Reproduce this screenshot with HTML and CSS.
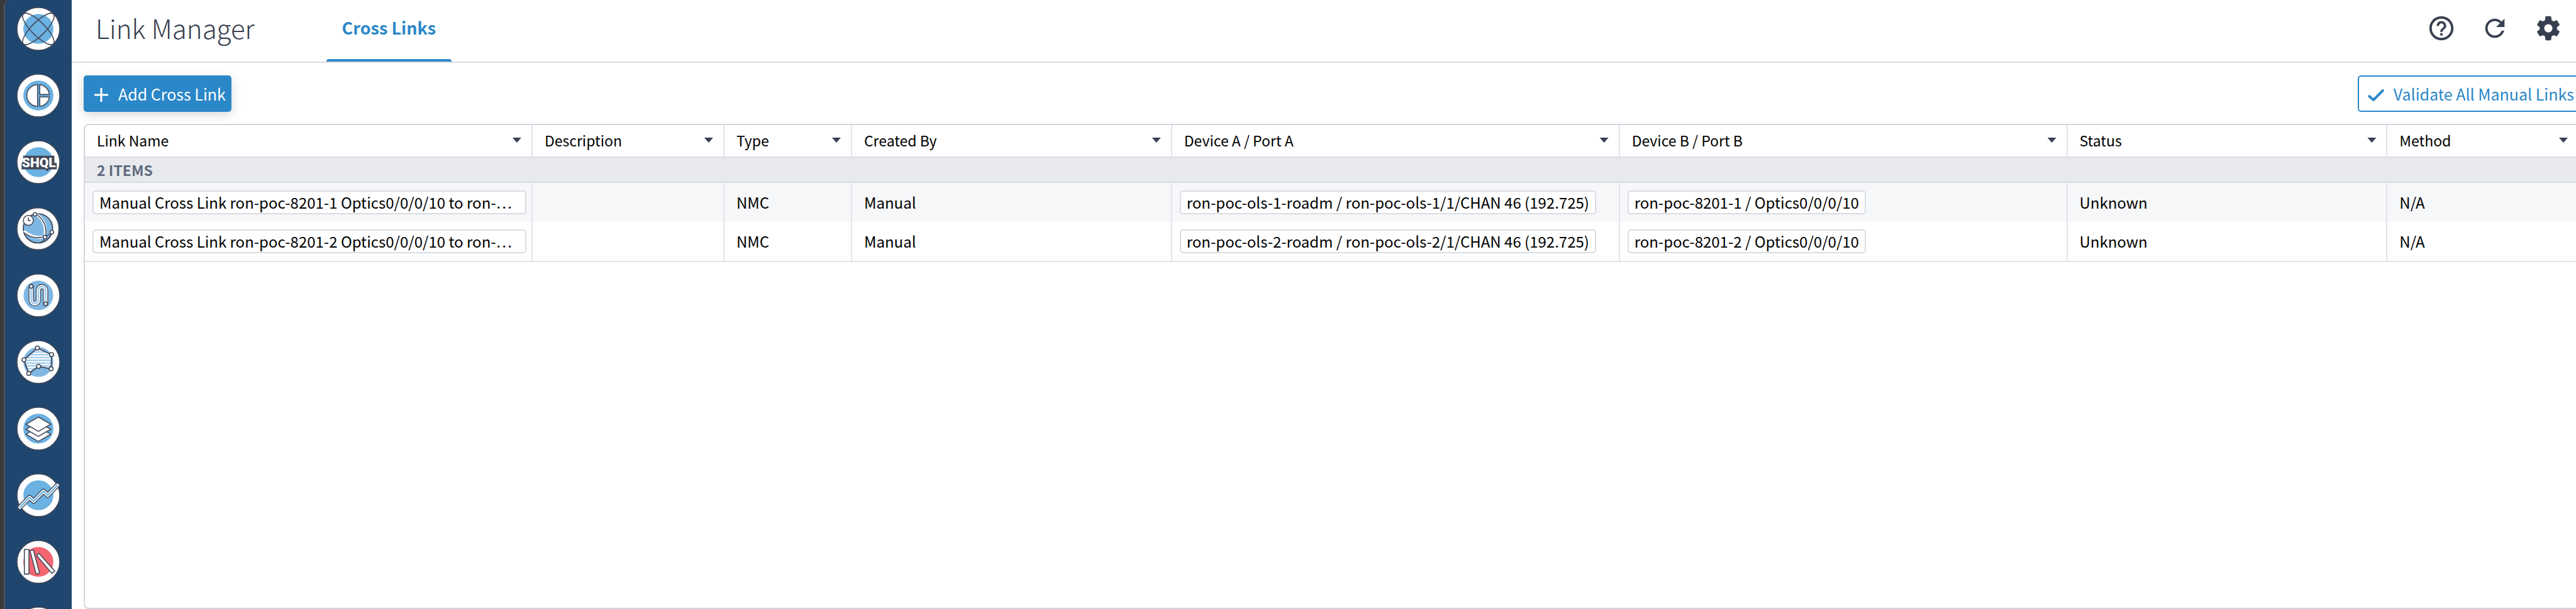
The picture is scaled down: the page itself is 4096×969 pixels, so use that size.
FILE: index.html
```html
<!DOCTYPE html>
<html lang="en">
<head>
    <meta charset="UTF-8">
    <meta name="viewport" content="width=device-width, initial-scale=1.0">
    <title>Link Manager</title>
    <link rel="stylesheet" href="styles.css">
</head>
<body>
    <nav class="sidebar" aria-label="Applications">
        <a class="app" href="#" aria-label="Explorer">
            <svg viewBox="0 0 220 220">
                <circle class="disc" cx="110" cy="110" r="107"/>
                <circle class="blue" cx="110" cy="110" r="75"/>
                <g class="line" transform="rotate(45 110 110)">
                    <ellipse cx="110" cy="110" rx="106" ry="34"/>
                    <ellipse cx="110" cy="110" rx="34" ry="106"/>
                </g>
            </svg>
        </a>
        <a class="app" href="#" aria-label="Dashboard">
            <svg viewBox="0 0 220 220">
                <circle class="disc" cx="110" cy="110" r="107"/>
                <circle class="blue" cx="110" cy="110" r="75"/>
                <g class="shape">
                    <path d="M106 56V164A54 54 0 0 1 106 56Z"/>
                    <path d="M117 56A54 54 0 0 1 165 105H117Z"/>
                    <path d="M117 117H165A54 54 0 0 1 117 164Z"/>
                </g>
            </svg>
        </a>
        <a class="app" href="#" aria-label="SHQL">
            <svg viewBox="0 0 220 220">
                <circle class="disc" cx="110" cy="110" r="107"/>
                <circle class="blue" cx="110" cy="110" r="75"/>
                <path class="dark" d="M34 78H190V114H202V146H164L155 156L144 146H26V118L34 104Z"/>
                <text class="shql" x="112" y="136">SHQL</text>
            </svg>
        </a>
        <a class="app" href="#" aria-label="Network history">
            <svg viewBox="0 0 220 220">
                <circle class="disc" cx="108" cy="110" r="105"/>
                <circle class="globe" cx="108" cy="108" r="73"/>
                <path class="band" d="M97 37Q155 70 143 150Q88 164 37 122"/>
                <path class="line" d="M100 38Q158 76 146 152M35 128Q60 148 92 154Q150 158 177 128"/>
                <path class="line" d="M143 152Q138 172 120 180"/>
                <g class="shape">
                    <circle cx="93" cy="38" r="9"/>
                    <circle cx="177" cy="127" r="9"/>
                    <circle cx="143" cy="152" r="9"/>
                    <circle cx="60" cy="68" r="25"/>
                </g>
                <path class="line" d="M60 54V69H72"/>
            </svg>
        </a>
        <a class="app" href="#" aria-label="Path">
            <svg viewBox="0 0 220 220">
                <circle class="disc" cx="110" cy="110" r="107"/>
                <circle class="soft" cx="110" cy="110" r="74"/>
                <g class="pipe">
                    <path class="pipe-edge" d="M74 65V133A18 18 0 0 0 110 133V84A18 18 0 0 1 146 84V151"/>
                    <path class="pipe-white" d="M74 65V133A18 18 0 0 0 110 133V84A18 18 0 0 1 146 84V151"/>
                    <path class="pipe-blue" d="M74 65V133A18 18 0 0 0 110 133V84A18 18 0 0 1 146 84V151"/>
                    <path class="pipe-core" d="M74 65V133A18 18 0 0 0 110 133V84A18 18 0 0 1 146 84V151"/>
                </g>
                <circle class="shape" cx="74" cy="65" r="9"/>
                <circle class="shape" cx="146" cy="152" r="9"/>
            </svg>
        </a>
        <a class="app" href="#" aria-label="Topology">
            <svg viewBox="0 0 220 220">
                <defs>
                    <pattern id="stripes" width="20" height="14" patternUnits="userSpaceOnUse">
                        <rect width="20" height="14" fill="#fff"/>
                        <rect width="20" height="7" fill="#9cc8ea"/>
                    </pattern>
                </defs>
                <circle class="disc" cx="110" cy="110" r="107"/>
                <circle class="soft" cx="110" cy="110" r="75"/>
                <path class="area" d="M105 40L176 73L174 144L111 132L62 167L38 99Z"/>
                <g class="shape">
                    <circle cx="105" cy="40" r="10"/>
                    <circle cx="176" cy="73" r="10"/>
                    <circle cx="174" cy="144" r="10"/>
                    <circle cx="111" cy="132" r="10"/>
                    <circle cx="62" cy="167" r="10"/>
                    <circle cx="38" cy="99" r="10"/>
                </g>
            </svg>
        </a>
        <a class="app" href="#" aria-label="Layers">
            <svg viewBox="0 0 220 220">
                <circle class="disc" cx="110" cy="110" r="107"/>
                <circle class="blue" cx="110" cy="110" r="75"/>
                <g class="shape">
                    <path d="M110 102L172 138L110 174L48 138Z"/>
                    <path d="M110 77L172 113L110 149L48 113Z"/>
                    <path d="M110 52L172 88L110 124L48 88Z"/>
                </g>
            </svg>
        </a>
        <a class="app" href="#" aria-label="Trends">
            <svg viewBox="0 0 220 220">
                <circle class="disc" cx="110" cy="110" r="107"/>
                <circle class="blue" cx="110" cy="110" r="75"/>
                <g class="pipe">
                    <path class="trend-edge" d="M18 170L66 121L87 140L135 90L157 110L205 60"/>
                    <path class="trend-white" d="M18 170L66 121L87 140L135 90L157 110L205 60"/>
                    <path class="trend-blue" d="M18 170L66 121L87 140L135 90L157 110L205 60"/>
                </g>
            </svg>
        </a>
        <a class="app" href="#" aria-label="Library">
            <svg viewBox="0 0 220 220">
                <circle class="disc" cx="110" cy="110" r="107"/>
                <circle class="red" cx="110" cy="110" r="75"/>
                <g class="shape">
                    <path d="M40 48H63V171H40Z"/>
                    <path d="M68 54L85 50L116 166L99 171Z"/>
                    <path d="M101 78L113 67L192 156L178 168Z"/>
                </g>
            </svg>
        </a>
        <a class="app" href="#" aria-label="More">
            <svg viewBox="0 0 220 220">
                <circle class="disc" cx="110" cy="110" r="107"/>
            </svg>
        </a>
    </nav>

    <main class="main">
        <header class="header">
            <h1>Link Manager</h1>
            <a class="tab" href="#">Cross Links</a>
            <div class="tools">
                <button class="tool" aria-label="Help">
                    <svg viewBox="0 0 24 24"><path d="M11 18h2v-2h-2v2zm1-16C6.480 2 2 6.480 2 12s4.480 10 10 10 10-4.480 10-10S17.520 2 12 2zm0 18c-4.410 0-8-3.590-8-8s3.590-8 8-8 8 3.590 8 8-3.590 8-8 8zm0-14c-2.210 0-4 1.790-4 4h2c0-1.100.9-2 2-2s2 .9 2 2c0 2-3 1.750-3 5h2c0-2.250 3-2.500 3-5 0-2.210-1.790-4-4-4z"/></svg>
                </button>
                <button class="tool" aria-label="Refresh">
                    <svg viewBox="0 0 24 24"><path d="M17.650 6.350C16.200 4.900 14.210 4 12 4c-4.420 0-7.990 3.580-7.990 8s3.570 8 7.990 8c3.730 0 6.840-2.550 7.730-6h-2.080c-.82 2.330-3.040 4-5.650 4-3.310 0-6-2.690-6-6s2.690-6 6-6c1.660 0 3.140.69 4.220 1.780L13 11h7V4l-2.350 2.350z"/></svg>
                </button>
                <button class="tool" aria-label="Settings">
                    <svg viewBox="0 0 24 24"><path d="M19.140 12.940c.04-.3.06-.61.06-.94 0-.32-.02-.64-.07-.94l2.030-1.580c.18-.14.23-.41.12-.61l-1.920-3.320c-.12-.22-.37-.29-.59-.22l-2.390.96c-.5-.38-1.030-.7-1.620-.94L14.400 2.810c-.04-.24-.24-.81-.48-.81h-3.840c-.24 0-.43.57-.47.81L9.250 5.350c-.59.24-1.130.57-1.620.94l-2.390-.96c-.22-.08-.47 0-.59.22L2.740 8.870c-.12.21-.08.47.12.61l2.030 1.580c-.05.3-.09.63-.09.94s.02.64.07.94l-2.030 1.580c-.18.14-.23.41-.12.61l1.920 3.320c.12.22.37.29.59.22l2.390-.96c.5.38 1.030.7 1.620.94l.36 2.540c.05.24.24.81.48.81h3.840c.24 0 .44-.57.47-.81l.36-2.540c.59-.24 1.130-.56 1.620-.94l2.390.96c.22.08.47 0 .59-.22l1.920-3.320c.12-.22.07-.47-.12-.61l-2.010-1.580zM12 15.400c-1.880 0-3.400-1.520-3.400-3.400s1.520-3.400 3.400-3.400 3.400 1.520 3.400 3.400-1.520 3.400-3.400 3.400z"/></svg>
                </button>
            </div>
        </header>

        <div class="content">
            <div class="actions">
                <button class="btn btn-primary">
                    <svg class="plus" viewBox="0 0 22 22"><path d="M11 0V22M0 11H22"/></svg>
                    Add Cross Link
                </button>
                <button class="btn btn-outline">
                    <svg class="check" viewBox="0 0 26 20"><path d="M1 11L9 18L25 2"/></svg>
                    Validate All Manual Links
                </button>
            </div>

            <div class="grid">
                <table>
                    <colgroup>
                        <col class="col-wide">
                        <col class="col-description">
                        <col class="col-type">
                        <col class="col-medium">
                        <col class="col-wide">
                        <col class="col-wide">
                        <col class="col-medium">
                        <col>
                    </colgroup>
                    <thead>
                        <tr>
                            <th><div class="head">Link Name<button class="sort" aria-label="Link Name menu"></button></div></th>
                            <th><div class="head">Description<button class="sort" aria-label="Description menu"></button></div></th>
                            <th><div class="head">Type<button class="sort" aria-label="Type menu"></button></div></th>
                            <th><div class="head">Created By<button class="sort" aria-label="Created By menu"></button></div></th>
                            <th><div class="head">Device A / Port A<button class="sort" aria-label="Device A menu"></button></div></th>
                            <th><div class="head">Device B / Port B<button class="sort" aria-label="Device B menu"></button></div></th>
                            <th><div class="head">Status<button class="sort" aria-label="Status menu"></button></div></th>
                            <th><div class="head">Method<button class="sort" aria-label="Method menu"></button></div></th>
                        </tr>
                    </thead>
                    <tbody>
                        <tr class="count">
                            <td colspan="8">2 ITEMS</td>
                        </tr>
                        <tr class="row">
                            <td class="chip-cell"><span class="chip chip-full">Manual Cross Link ron-poc-8201-1 Optics0/0/0/10 to ron-…</span></td>
                            <td></td>
                            <td>NMC</td>
                            <td>Manual</td>
                            <td class="chip-cell"><span class="chip">ron-poc-ols-1-roadm / ron-poc-ols-1/1/CHAN 46 (192.725)</span></td>
                            <td class="chip-cell"><span class="chip">ron-poc-8201-1 / Optics0/0/0/10</span></td>
                            <td>Unknown</td>
                            <td>N/A</td>
                        </tr>
                        <tr class="row">
                            <td class="chip-cell"><span class="chip chip-full">Manual Cross Link ron-poc-8201-2 Optics0/0/0/10 to ron-…</span></td>
                            <td></td>
                            <td>NMC</td>
                            <td>Manual</td>
                            <td class="chip-cell"><span class="chip">ron-poc-ols-2-roadm / ron-poc-ols-2/1/CHAN 46 (192.725)</span></td>
                            <td class="chip-cell"><span class="chip">ron-poc-8201-2 / Optics0/0/0/10</span></td>
                            <td>Unknown</td>
                            <td>N/A</td>
                        </tr>
                    </tbody>
                </table>
            </div>
        </div>
    </main>
</body>
</html>
```
FILE: styles.css
```css
* {
    box-sizing: border-box;
}
body {
    margin: 0;
    height: 100vh;
    display: flex;
    overflow: hidden;
    background: #3a3a3d;
    font-family: "Noto Sans CJK SC", "Noto Sans", sans-serif;
    font-size: 24px;
    color: #000;
}
button {
    font: inherit;
    cursor: pointer;
}

/* sidebar */
.sidebar {
    flex: none;
    width: 108px;
    margin-left: 6px;
    padding-top: 11px;
    display: flex;
    flex-direction: column;
    align-items: center;
    gap: 36px;
    overflow: hidden;
    background: #1e466f;
    border-left: 2px solid #57585c;
    border-top-left-radius: 10px;
}
.app {
    flex: none;
    width: 70px;
    height: 70px;
}
.app svg {
    display: block;
    width: 100%;
    height: 100%;
    overflow: visible;
}
.disc {
    fill: #fff;
    stroke: #434a5b;
    stroke-width: 5;
}
.blue {
    fill: #6bb1e1;
}
.soft {
    fill: #7fb7e2;
}
.red {
    fill: #f4656f;
}
.dark {
    fill: #434a5b;
}
.line {
    fill: none;
    stroke: #434a5b;
    stroke-width: 5;
}
.shape {
    fill: #fff;
    stroke: #434a5b;
    stroke-width: 5;
}
.globe {
    fill: #7fb7e2;
    stroke: #434a5b;
    stroke-width: 6;
}
.band {
    fill: none;
    stroke: #fff;
    stroke-width: 14;
}
.area {
    fill: url(#stripes);
    stroke: #434a5b;
    stroke-width: 6;
}
.shql {
    fill: #fff;
    font-family: Roboto, sans-serif;
    font-size: 66px;
    font-weight: 900;
    text-anchor: middle;
}
.pipe path {
    fill: none;
    stroke-linecap: round;
    stroke-linejoin: round;
}
.pipe .pipe-edge {
    stroke: #434a5b;
    stroke-width: 26;
}
.pipe .pipe-white {
    stroke: #fff;
    stroke-width: 18;
}
.pipe .pipe-blue {
    stroke: #7fb7e2;
    stroke-width: 8;
}
.pipe .pipe-core {
    stroke: #fff;
    stroke-width: 2;
}
.pipe .trend-edge {
    stroke: #434a5b;
    stroke-width: 25;
}
.pipe .trend-white {
    stroke: #fff;
    stroke-width: 16;
}
.pipe .trend-blue {
    stroke: #6bb1e1;
    stroke-width: 7;
}

/* header */
.main {
    flex: 1;
    min-width: 0;
    display: flex;
    flex-direction: column;
    background: #fff;
}
.header {
    flex: none;
    height: 100px;
    display: flex;
    align-items: stretch;
    padding: 0 21px 0 38px;
    border-bottom: 2px solid #d9dce3;
}
.header h1 {
    margin: 0 114px 0 0;
    font-size: 42px;
    line-height: 88px;
    font-weight: 300;
    color: #383f50;
}
.tab {
    padding: 0 25px;
    font-size: 27px;
    line-height: 88px;
    font-weight: 600;
    color: #2a87c8;
    text-decoration: none;
    position: relative;
}
.tab::after {
    content: "";
    position: absolute;
    left: 0;
    right: 0;
    bottom: 0;
    height: 4px;
    background: #2a87c8;
    border-radius: 4px 4px 0 0;
}
.tools {
    margin-left: auto;
    height: 90px;
    display: flex;
    align-items: center;
    gap: 39px;
}
.tool {
    width: 46px;
    height: 46px;
    padding: 0;
    border: none;
    background: none;
}
.tool svg {
    display: block;
    fill: #383f50;
}

/* content runs a little past the right edge */
.content {
    flex: 1;
    display: flex;
    flex-direction: column;
    gap: 19px;
    margin-right: -7px;
    padding: 20px 0 0 19px;
}
.actions {
    display: flex;
    justify-content: space-between;
}
.btn {
    height: 58px;
    display: flex;
    align-items: center;
    border-radius: 5px;
    font-size: 25px;
    line-height: 36px;
    white-space: nowrap;
}
.btn svg {
    margin-top: 4px;
    fill: none;
    stroke: currentColor;
}
.btn-primary {
    gap: 16px;
    padding: 0 9px 0 17px;
    border: none;
    color: #fff;
    background: #2a87c8;
    box-shadow: 0 4px 16px rgba(0, 0, 0, 0.16);
}
.btn-outline {
    gap: 15px;
    padding: 0 8px 0 14px;
    border: 2px solid #2a87c8;
    color: #2a87c8;
    background: #fff;
}
.plus {
    width: 22px;
    height: 22px;
    stroke-width: 3;
}
.check {
    width: 26px;
    height: 20px;
    stroke-width: 4;
}

/* table */
.grid {
    flex: 1;
    border: 2px solid #d3d6e0;
    border-radius: 8px;
    overflow: hidden;
}
table {
    width: 100%;
    table-layout: fixed;
    border-collapse: separate;
    border-spacing: 0;
}
.col-wide {
    width: 17.95%;
}
.col-description {
    width: 7.69%;
}
.col-type {
    width: 5.12%;
}
.col-medium {
    width: 12.83%;
}
th,
td {
    padding: 0 0 0 19px;
    text-align: left;
    white-space: nowrap;
    border-right: 2px solid #e2e4e9;
}
th {
    height: 52px;
    font-size: 23px;
    font-weight: 400;
    border-bottom: 2px solid #d9dce3;
}
.head {
    display: flex;
    align-items: center;
    justify-content: space-between;
    padding: 0 16px 2px 0;
    line-height: 32px;
}
.sort {
    width: 14px;
    height: 8px;
    padding: 0;
    border: none;
    background: #383f50;
    clip-path: polygon(0 0, 100% 0, 50% 100%);
}
.count td {
    height: 40px;
    font-size: 23px;
    line-height: 32px;
    font-weight: 600;
    color: #5f6b80;
    background: #e8e9ed;
    border-bottom: 2px solid #d9dce3;
}
.row td {
    height: 62px;
    line-height: 34px;
}
.row:nth-child(even) td {
    background: #f6f7f9;
}
.row:last-child td {
    height: 64px;
    border-bottom: 2px solid #e2e4e9;
}
.row .chip-cell {
    padding: 0 8px 0 12px;
}
.chip {
    display: block;
    width: fit-content;
    padding: 0 9px;
    line-height: 34px;
    border: 2px solid #d9dce3;
    border-radius: 5px;
    background: #fff;
}
.chip-full {
    width: auto;
    overflow: hidden;
    text-overflow: ellipsis;
}
```
